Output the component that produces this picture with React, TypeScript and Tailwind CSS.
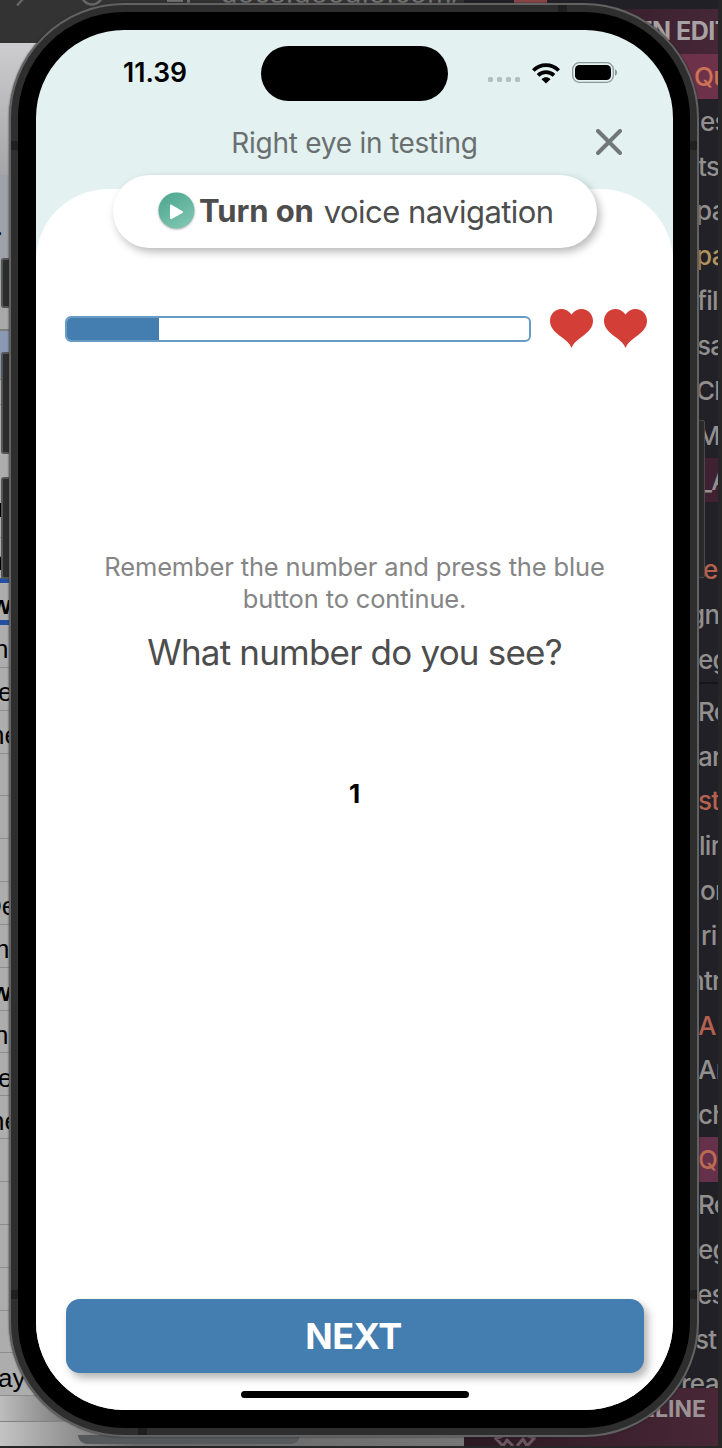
type SheetRow = { text?: string; left?: number; bold?: boolean };

const sheetRows: SheetRow[] = [
  { text: "n", left: -6 },
  { text: "e", left: -2 },
  { text: "ne", left: -10 },
  {},
  {},
  {},
  { text: "De", left: -17 },
  { text: "h", left: -5 },
  { text: "w", left: -9, bold: true },
  { text: "n", left: -6 },
  { text: "e", left: -2 },
  { text: "ne", left: -10 },
  {},
  {},
  {},
  {},
  {},
  { text: "ay", left: -2 },
];

type CodeRow = { text?: string; left?: number; tone?: string };

const grey = "text-[#92908f]";
const red = "text-[#b5614f]";

const upperRows: CodeRow[] = [
  { text: "Qu", left: -5, tone: "bg-[#6e314a] text-[#cc7255]" },
  { text: "es", left: 1, tone: grey },
  { text: "ts", left: -1, tone: grey },
  { text: "pa", left: -3, tone: grey },
  { text: "pa", left: -3, tone: "text-[#b0935f]" },
  { text: "file", left: -2, tone: grey },
  { text: "sa", left: -2, tone: grey },
  { text: "Ch", left: -3, tone: grey },
  { text: "M", left: -2, tone: grey },
  { text: "_A", left: 1, tone: "bg-[#3f2131] text-[#92908f]" },
  {},
  { text: "e", left: 4, tone: red },
  { text: "gn", left: -10, tone: grey },
  { text: "eg", left: -1, tone: grey },
];

const lowerRows: CodeRow[] = [
  { text: "Re", left: -1, tone: grey },
  { text: "ar", left: -1, tone: grey },
  { text: "st", left: -1, tone: red },
  { text: "lir", left: 0, tone: grey },
  { text: "or", left: 1, tone: grey },
  { text: "ri", left: 2, tone: grey },
  { text: "ntr", left: -10, tone: grey },
  { text: "A", left: -1, tone: red },
  { text: "Ar", left: -1, tone: grey },
  { text: "ch", left: -1, tone: grey },
  { text: "Q", left: -1, tone: "bg-[#64304a] text-[#bb6a52]" },
  { text: "Re", left: -1, tone: grey },
  { text: "eg", left: -1, tone: grey },
  { text: "es", left: -2, tone: grey },
  { text: "st", left: -4, tone: grey },
  { text: "rea", left: -18, tone: grey },
];

function CodeLine({ text, left, tone }: CodeRow) {
  return (
    <div className={"flex h-[44.85px] shrink-0 items-center pl-[49px] text-[26px] font-medium tracking-[-0.7px] " + (tone ?? "")}>
      <span className="whitespace-nowrap" style={{ marginLeft: left }}>
        {text}
      </span>
    </div>
  );
}

function BrowserWindow() {
  return (
    <div className="absolute left-0 top-0 flex h-[1446px] w-[550px] flex-col overflow-hidden bg-[#adadad] font-['Liberation_Sans',sans-serif] text-[26px] text-black">
      <div className="relative h-[43px] shrink-0 bg-[#333333]">
        <svg className="absolute left-0 top-0" width="110" height="8" viewBox="0 0 110 8" fill="none" stroke="#666" strokeWidth="2.4">
          <path d="M17 5.500L23 -1" />
          <circle cx="92" cy="-6" r="10.500" />
        </svg>
        <div className="absolute left-[167px] top-[-3px] h-[5px] w-[16px] bg-[#6e6e6e]" />
        <div className="absolute left-[187px] top-[-3px] h-[6px] w-[3px] bg-[#6e6e6e]" />
        <span className="absolute left-[221px] top-[-23px] text-[29px] leading-[32px] tracking-[0.8px] text-[#737373]">docs.google.com/</span>
      </div>
      <div className="h-[132px] shrink-0 bg-linear-to-b from-[#cdcdcf] to-[#a5a5a7]" />
      <div className="flex h-[105px] shrink-0 items-center bg-[#9da1a8]">
        <span className="-ml-[4px] pb-[3px]">.</span>
      </div>
      <div className="h-[51px] shrink-0 border-b-2 border-[#7d7d7d] bg-[#a9a9a9]" />
      <div className="h-[49px] shrink-0 border-b border-[#7d7d7d] bg-[#8b98b4]" />
      <div className="h-[25px] shrink-0 border-b border-[#8d8d8d]" />
      <div className="h-[133px] shrink-0 border-b border-[#8d8d8d] pt-[98px]">
        <div className="h-[14px] w-[2px] bg-black" />
      </div>
      <div className="flex h-[45px] shrink-0 items-center border-b-[5px] border-[#2450a2] font-bold">
        <span className="-ml-[12px] pt-[6px]">h</span>
      </div>
      <div className="flex h-[42px] shrink-0 items-center border-b-[5px] border-[#2450a2] font-bold">
        <span className="-ml-[9px] pt-[7px]">w</span>
      </div>
      {sheetRows.map((row, i) => (
        <div key={i} className="flex h-[42.85px] shrink-0 items-center border-b border-[#8d8d8d] pt-[8px]">
          <span className={row.bold ? "font-bold" : ""} style={{ marginLeft: row.left }}>
            {row.text}
          </span>
        </div>
      ))}
      <div className="h-[26px] shrink-0 border-b border-[#828282] bg-linear-to-r from-[#bdbdbd] from-0% to-[#555] to-20%" />
      <div className="flex grow bg-linear-to-r from-[#c4c4c4] from-0% via-[#666] via-25% to-[#7a7a7a] pl-[78px] pt-[13px]">
        <div className="h-[9px] w-[222px] rounded-b-[9px] bg-[#56585a]" />
      </div>
    </div>
  );
}

function EditorWindow() {
  return (
    <div className="absolute left-[464px] top-0 flex h-[1446px] w-[254px] flex-col overflow-hidden bg-[#222027] font-[Inter,sans-serif]">
      <div className="flex h-[9px] shrink-0 bg-[#222027] pl-[50px]">
        <div className="h-[3px] w-[33px] bg-[#8a4549]" />
      </div>
      <div className="flex h-[45px] shrink-0 items-center justify-end bg-linear-to-r from-[#25171f] to-[#462737]">
        <span className="mr-[-13px] text-[25px] font-bold tracking-[-0.5px] text-[#a9a2a5]">OPEN EDIT</span>
      </div>
      <div className="flex flex-col bg-[#232128] pl-[186px] [&>*]:shrink-0">
        {upperRows.map((row, i) => (
          <CodeLine key={i} {...row} />
        ))}
      </div>
      <div className="h-[7px] shrink-0 border-t-2 border-[#15151a]" />
      <div className="flex h-[699px] shrink-0 flex-col overflow-hidden pl-[186px]">
        {lowerRows.map((row, i) => (
          <CodeLine key={i} {...row} />
        ))}
      </div>
      <div className="relative flex grow justify-end bg-linear-to-r from-[#2b1921] to-[#492736] pr-[12px] pt-[7px]">
        <span className="text-[23px] font-bold leading-[28px] text-[#9b9295]">TIMELINE</span>
        <svg className="absolute left-[28px] top-[46px]" width="46" height="14" viewBox="0 0 46 14" fill="none" stroke="#6a5660" strokeWidth="3">
          <path d="M13 1L4 4.500L11 12L15 6L21 12M25 12L31 5L35 12L42 4.500L34 1" />
        </svg>
      </div>
    </div>
  );
}

function Wifi() {
  return (
    <svg width="28" height="21" viewBox="0 0 28 21" fill="none" stroke="#000" strokeWidth="3.700">
      <path d="M1.300 7.500C8.500 0.300 19.500 0.300 26.700 7.500" />
      <path d="M6 12.300C10.600 8 17.400 8 22 12.300" />
      <path d="M9.500 16.200C12.300 13.700 15.700 13.700 18.500 16.200L14 20.500Z" fill="#000" stroke="none" />
    </svg>
  );
}

function Battery() {
  return (
    <svg width="46" height="21" viewBox="0 0 46 21">
      <rect x="0.700" y="0.700" width="40.600" height="19.600" rx="6.500" fill="none" stroke="#8c9796" strokeWidth="1.300" />
      <rect x="3" y="3" width="36" height="15" rx="4.500" fill="#000" />
      <path d="M43 7.200C45.800 8.300 45.800 12.700 43 13.800Z" fill="#8c9796" />
    </svg>
  );
}

function Heart() {
  return (
    <svg width="43" height="39" viewBox="0 0 43 39" fill="#d33e36">
      <path d="M21.500 5.500C24.500 1.500 28 0 31.500 0C38 0 43 5.300 43 12C43 18.500 38.500 23 31.500 28C26.500 31.500 23 35 21.500 39C20 35 16.500 31.500 11.500 28C4.500 23 0 18.500 0 12C0 5.300 5 0 11.500 0C15 0 18.500 1.500 21.500 5.500Z" />
    </svg>
  );
}

function Phone() {
  return (
    <div className="absolute left-[9px] top-[3px] h-[1434px] w-[690px]">
      <div className="absolute left-[-8px] top-[255px] h-[50px] w-[10px] rounded-l-[3px] border-2 border-[#555] bg-[#2c2c2c]" />
      <div className="absolute left-[-8px] top-[349px] h-[102px] w-[10px] rounded-l-[3px] border-2 border-[#555] bg-[#2c2c2c]" />
      <div className="absolute left-[-8px] top-[474px] h-[102px] w-[10px] rounded-l-[3px] border-2 border-[#555] bg-[#2c2c2c]" />
      <div className="absolute right-[-6px] top-[417px] h-[158px] w-[9px] rounded-r-[2px] border border-[#4a4a4a] bg-[#2a2a2a]" />
      <div className="relative flex h-full w-full rounded-[115px] border-2 border-[#626262] bg-[#2e2e2e] p-[7px] shadow-[0_0_2px_0_#222]">
        <div className="absolute left-0 top-[136px] h-[9px] w-full bg-[#1f1f1f]" />
        <div className="absolute left-0 top-[1285px] h-[9px] w-full bg-[#1f1f1f]" />
        <div className="absolute left-[547px] top-0 h-[8px] w-[9px] bg-[#1f1f1f]" />
        <div className="absolute bottom-0 left-[127px] h-[8px] w-[9px] bg-[#1f1f1f]" />
        <div className="relative flex h-full w-full rounded-[106px] bg-black pb-[18px] pl-[18px] pr-[17px] pt-[18px]">
          <Screen />
        </div>
      </div>
    </div>
  );
}

function Screen() {
  return (
    <div className="flex w-full flex-col overflow-hidden rounded-[88px] bg-[#e3f1f1] font-[Inter,sans-serif]">
      <header className="flex h-[159px] shrink-0 flex-col">
        <div className="flex h-[87px] shrink-0 pt-[16px]">
          <div className="flex h-[54px] w-[225px] items-center pl-[87px] text-[26.500px] font-semibold">11.39</div>
          <div className="h-[55px] w-[187px] rounded-full bg-black" />
          <div className="flex h-[54px] items-center pl-[40px]">
            <div className="flex gap-[4px] pt-[13px]">
              <i className="size-[5px] rounded-[1.5px] bg-[#b4c0c0]" />
              <i className="size-[5px] rounded-[1.5px] bg-[#b4c0c0]" />
              <i className="size-[5px] rounded-[1.5px] bg-[#b4c0c0]" />
              <i className="size-[5px] rounded-[1.5px] bg-[#b4c0c0]" />
            </div>
            <div className="ml-[12px]">
              <Wifi />
            </div>
            <div className="ml-[12px] pb-px">
              <Battery />
            </div>
          </div>
        </div>
        <div className="flex h-[50px] items-center">
          <h1 className="w-[561px] pl-[76px] pt-px text-center text-[28px] tracking-[-0.25px] text-[#6a6f6f]">Right eye in testing</h1>
          <svg className="-ml-px" width="26" height="26" viewBox="0 0 26 26" stroke="#727878" strokeWidth="4" strokeLinecap="round">
            <path d="M2 2L24 24M24 2L2 24" />
          </svg>
        </div>
      </header>
      <main className="flex grow flex-col rounded-t-[72px] bg-white">
        <button className="relative mt-[-14px] ml-[77px] flex h-[73px] w-[484px] shrink-0 items-center rounded-full bg-white pl-[45px] text-[31px] text-[#4d4d4d] shadow-[3px_4px_9px_rgba(0,0,0,0.28)]">
          <svg className="mt-[-2px] shrink-0 overflow-visible drop-shadow-[0_1px_1px_rgba(0,0,0,0.3)]" width="36" height="36" viewBox="0 0 36 36">
            <defs>
              <linearGradient id="play" x1="0" y1="0" x2="0.600" y2="1">
                <stop offset="0" stopColor="#4aa58c" />
                <stop offset="1" stopColor="#7dc3b0" />
              </linearGradient>
            </defs>
            <circle cx="18.500" cy="17.500" r="18" fill="url(#play)" />
            <path d="M13 12.500V25L24 19Z" fill="#fff" stroke="#fff" strokeWidth="2" strokeLinejoin="round" />
          </svg>
          <span className="ml-[5px] whitespace-nowrap font-bold tracking-[-0.1px]">Turn on</span>
          <span className="ml-[10px] whitespace-nowrap pt-px tracking-[-0.55px]">voice navigation</span>
        </button>
        <div className="ml-[29px] mt-[61px] flex h-[39px] shrink-0 items-center">
          <div className="h-[26px] w-[466px] overflow-hidden rounded-[6px] border-2 border-[#699cc4] bg-white">
            <div className="h-full w-[90px] bg-[#447db0] outline-2 outline-[#447db0]" />
          </div>
          <div className="ml-[19px] flex gap-[11px]">
            <Heart />
            <Heart />
          </div>
        </div>
        <div className="mt-[203px] flex w-[637px] flex-col items-center text-center">
          <p className="whitespace-nowrap text-[25.500px] leading-[32px] tracking-[-0.15px] text-[#858585]">
            Remember the number and press the blue
            <br />
            button to continue.
          </p>
          <h2 className="mt-[15px] text-[35px] leading-[44px] tracking-[-0.8px] text-[#4d4d4d]">What number do you see?</h2>
          <p className="mt-[104px] text-[26px] font-bold leading-[32px]">1</p>
        </div>
        <div className="mt-auto flex shrink-0 flex-col items-center pb-[12px]">
          <button className="h-[74px] w-[578px] rounded-[14px] bg-[#447db0] pr-[2px] text-[36px] font-bold tracking-[-0.5px] text-white shadow-[4px_5px_9px_rgba(0,0,0,0.3)]">NEXT</button>
          <div className="mt-[18px] h-[7px] w-[228px] rounded-full bg-black" />
        </div>
      </main>
    </div>
  );
}

export default function App() {
  return (
    <div className="relative h-[1448px] w-[722px] overflow-hidden bg-[#262626]">
      <BrowserWindow />
      <EditorWindow />
      <Phone />
    </div>
  );
}
